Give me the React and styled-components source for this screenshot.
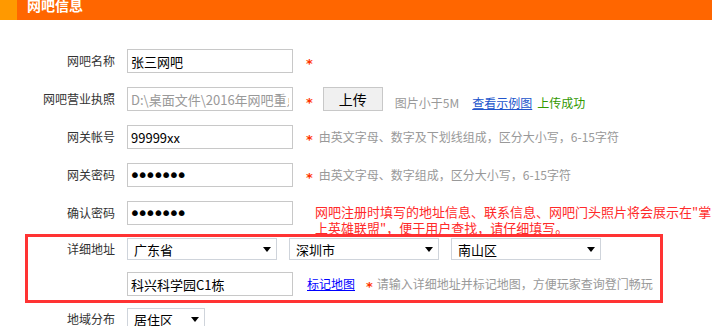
import React from "react";
import styled, { createGlobalStyle } from "styled-components";

const Global = createGlobalStyle`
  html, body { margin: 0; padding: 0; background: #fff; }
  body { font-family: "Noto Sans CJK SC", "Noto Sans", sans-serif; font-size: 12px; color: #333; }
  * { box-sizing: border-box; }
`;

const Page = styled.div`
  width: 712px;
  height: 326px;
  overflow: hidden;
`;

const Header = styled.div`
  display: flex;
  align-items: flex-start;
  height: 20px;
  background: #ff6600;
  overflow: hidden;
`;

const Tab = styled.div`
  width: 17px;
  height: 100%;
  background: #ff9900;
`;

const Title = styled.h2`
  margin: -3px 0 0 10px;
  font-size: 14px;
  line-height: 16px;
  font-weight: bold;
  color: #fff;
`;

const Form = styled.div`
  display: flex;
  flex-direction: column;
  padding-top: 29px;
`;

const Row = styled.div`
  display: flex;
  align-items: ${(p) => p.$align || "center"};
  height: ${(p) => p.$h || 24}px;
  margin-top: ${(p) => (p.$mt === undefined ? 14 : p.$mt)}px;
`;

const Label = styled.label`
  flex-shrink: 0;
  width: ${(p) => p.$w || 127}px;
  padding-right: 12px;
  text-align: right;
  font-size: 12px;
  line-height: 16px;
  color: #333;
  align-self: center;
`;

const TextInput = styled.input`
  width: 166px;
  height: 24px;
  padding: 0 3px;
  border: 1px solid #c8c8c8;
  font-family: "Noto Sans CJK SC", sans-serif;
  font-size: 13px;
  color: ${(p) => (p.$muted ? "#999" : "#000")};
  background: #fff;
  outline: none;
  flex-shrink: 0;
  align-self: center;
`;

const PasswordInput = styled(TextInput).attrs({ type: "password" })`
  font-family: "DejaVu Sans", sans-serif;
  font-size: 20px;
  letter-spacing: -4px;
  padding-left: 1px;
`;

const Star = styled.span`
  color: #ff3300;
  font-family: "DejaVu Sans", sans-serif;
  font-size: 13px;
  font-weight: bold;
  line-height: 16px;
  margin-left: ${(p) => (p.$ml === undefined ? 13 : p.$ml)}px;
  padding-top: ${(p) => p.$pt || 5}px;
`;

const Hint = styled.span`
  color: #999;
  font-size: 12px;
  line-height: 16px;
  margin-left: ${(p) => (p.$ml === undefined ? 6 : p.$ml)}px;
  white-space: nowrap;
`;

const UploadButton = styled.button`
  width: 60px;
  height: 24px;
  margin-left: 10px;
  border: 1px solid #c8c8c8;
  background: #f0f0f0;
  font-family: "Noto Sans CJK SC", sans-serif;
  font-size: 14px;
  color: #000;
  padding: 0;
  align-self: center;
`;

const Link = styled.a`
  color: ${(p) => p.$color || "#2255cc"};
  text-decoration: underline;
  font-size: 12px;
  line-height: 16px;
  margin-left: ${(p) => p.$ml || 0}px;
  white-space: nowrap;
  cursor: pointer;
`;

const Success = styled.span`
  color: #339900;
  font-size: 12px;
  line-height: 16px;
  margin-left: 5px;
`;

const Note = styled.p`
  align-self: flex-start;
  margin: 3px 0 0 22px;
  color: #ff2a2a;
  font-size: 13px;
  line-height: 16px;
  white-space: nowrap;
  position: relative;
  z-index: 1;
`;

const AddressBox = styled.div`
  display: flex;
  flex-direction: column;
  width: 638px;
  margin: 9px 0 0 25px;
  padding: 1px 0 4px;
  border: 3px solid #ff3333;
`;

const Dropdown = styled.div`
  display: flex;
  align-items: center;
  justify-content: space-between;
  width: ${(p) => p.$w || 150}px;
  height: 22px;
  padding: 0 5px 0 6px;
  border: 1px solid #cfd4db;
  background: #fff;
  font-size: 13px;
  color: #000;
  flex-shrink: 0;
  align-self: flex-start;
  & + & { margin-left: 12px; }
`;

const Arrow = () => (
  <svg width="8" height="5" viewBox="0 0 8 5" aria-hidden="true">
    <path d="M0 0H8L4 5Z" fill="#000" />
  </svg>
);

const Select = ({ value, w }) => (
  <Dropdown $w={w} role="combobox">
    <span>{value}</span>
    <Arrow />
  </Dropdown>
);

export default function App() {
  return (
    <>
      <Global />
      <Page>
        <Header>
          <Tab />
          <Title>网吧信息</Title>
        </Header>
        <Form>
          <Row $mt={0}>
            <Label>网吧名称</Label>
            <TextInput defaultValue="张三网吧" />
            <Star>*</Star>
          </Row>
          <Row $align="flex-end">
            <Label>网吧营业执照</Label>
            <TextInput $muted readOnly defaultValue="D:\桌面文件\2016年网吧重点资料\营业执照.jpg" />
            <Star $pt={1}>*</Star>
            <UploadButton>上传</UploadButton>
            <Hint $ml={12}>图片小于5M</Hint>
            <Link $ml={13}>查看示例图</Link>
            <Success>上传成功</Success>
          </Row>
          <Row>
            <Label>网关帐号</Label>
            <TextInput defaultValue="99999xx" />
            <Star>*</Star>
            <Hint>由英文字母、数字及下划线组成，区分大小写，6-15字符</Hint>
          </Row>
          <Row>
            <Label>网关密码</Label>
            <PasswordInput defaultValue="1234567" />
            <Star>*</Star>
            <Hint>由英文字母、数字组成，区分大小写，6-15字符</Hint>
          </Row>
          <Row>
            <Label>确认密码</Label>
            <PasswordInput defaultValue="1234567" />
            <Note>
              网吧注册时填写的地址信息、联系信息、网吧门头照片将会展示在"掌
              <br />
              上英雄联盟"，便于用户查找，请仔细填写。
            </Note>
          </Row>
          <AddressBox>
            <Row $mt={0} $h={22}>
              <Label $w={99}>详细地址</Label>
              <Select value="广东省" />
              <Select value="深圳市" />
              <Select value="南山区" />
            </Row>
            <Row $mt={12}>
              <Label $w={99} />
              <TextInput defaultValue="科兴科学园C1栋" />
              <Link $color="#0000ff" $ml={14}>标记地图</Link>
              <Star $ml={11}>*</Star>
              <Hint $ml={4}>请输入详细地址并标记地图，方便玩家查询登门畅玩</Hint>
            </Row>
          </AddressBox>
          <Row $mt={5} $h={22}>
            <Label>地域分布</Label>
            <Select value="居住区" w={78} />
          </Row>
        </Form>
      </Page>
    </>
  );
}
